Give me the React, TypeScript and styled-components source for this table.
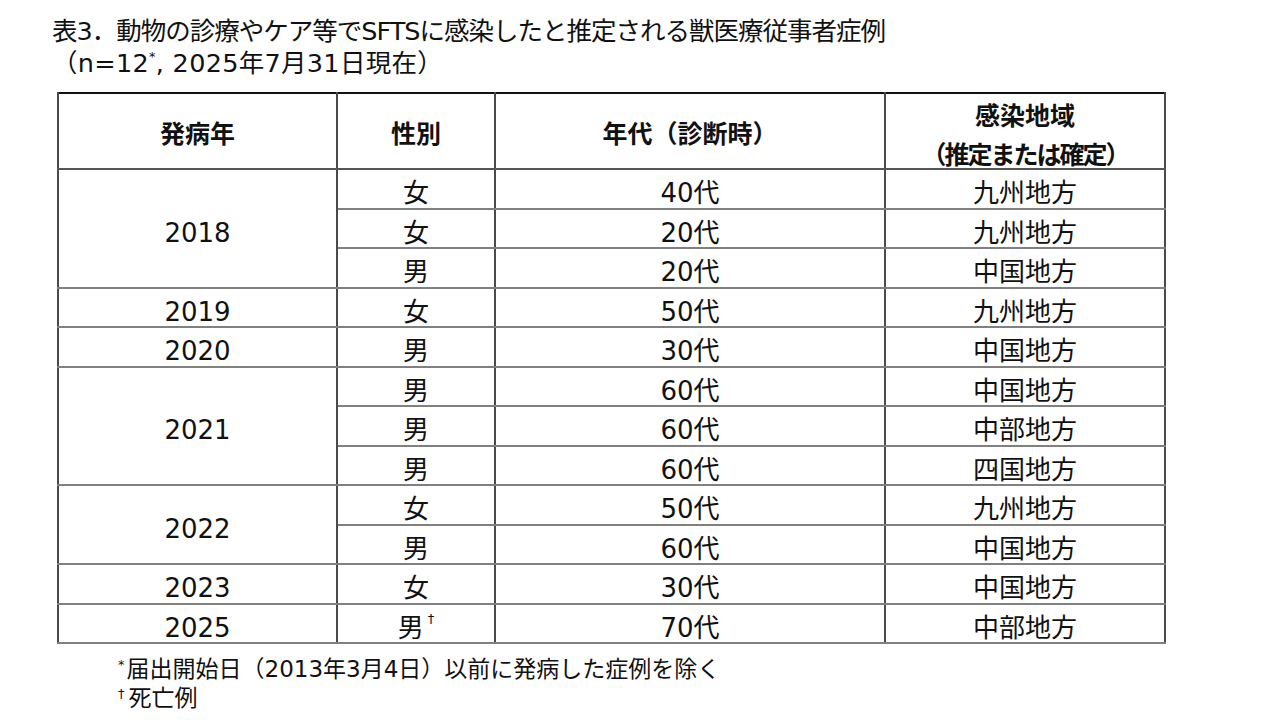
import React from "react";
import styled, { createGlobalStyle } from "styled-components";

const Global = createGlobalStyle`
  html, body { margin: 0; padding: 0; background: #fff; }
  body { font-family: "DejaVu Sans", "Noto Sans CJK JP", sans-serif; color: #111; }
`;

const Page = styled.div`
  width: 1280px;
  height: 720px;
  overflow: hidden;
  box-sizing: border-box;
  padding: 15px 0 0 52px;
`;

const Title = styled.div<{ $ls: number }>`
  font-size: 25.5px;
  line-height: 32px;
  letter-spacing: ${(p) => p.$ls}px;
  white-space: nowrap;
`;

const Sup = styled.sup<{ $top?: number; $gap?: number }>`
  font-size: 13px;
  vertical-align: top;
  line-height: 1;
  position: relative;
  top: ${(p) => p.$top ?? 2}px;
  margin-right: ${(p) => p.$gap ?? 0}px;
`;

const Table = styled.table`
  margin: 13px 0 0 5px;
  width: 1107px;
  table-layout: fixed;
  border-collapse: collapse;
  border-top: 2px solid #111;
`;

const Col = styled.col<{ $w: number }>`
  width: ${(p) => p.$w}px;
`;

const Th = styled.th`
  font-weight: 700;
  font-size: 25px;
  height: 74px;
  padding: 0;
  text-align: center;
  border-left: 2px solid #4a4a4a;
  border-right: 2px solid #4a4a4a;
  border-bottom: 2px solid #555;
  vertical-align: top;
  white-space: nowrap;
`;

const Head = styled.div<{ $lines: number }>`
  line-height: 39px;
  padding-top: ${(p) => (p.$lines === 1 ? 21 : 3)}px;
  margin-bottom: ${(p) => (p.$lines === 2 ? -7 : 0)}px;
`;

const Tight = styled.span`
  letter-spacing: -2px;
`;

const Td = styled.td`
  font-size: 26px;
  line-height: 28px;
  height: 39.5px;
  padding: 9px 0 0;
  box-sizing: border-box;
  text-align: center;
  vertical-align: middle;
  border-left: 2px solid #4a4a4a;
  border-right: 2px solid #4a4a4a;
  border-bottom: 2px solid #808080;
`;

const Notes = styled.div`
  margin: 11px 0 0 66px;
  font-size: 23px;
  line-height: 29px;
  white-space: nowrap;
`;

type Row = { year?: string; span?: number; sex: string; dead?: boolean; age: string; area: string };

const rows: Row[] = [
  { year: "2018", span: 3, sex: "女", age: "40代", area: "九州地方" },
  { sex: "女", age: "20代", area: "九州地方" },
  { sex: "男", age: "20代", area: "中国地方" },
  { year: "2019", span: 1, sex: "女", age: "50代", area: "九州地方" },
  { year: "2020", span: 1, sex: "男", age: "30代", area: "中国地方" },
  { year: "2021", span: 3, sex: "男", age: "60代", area: "中国地方" },
  { sex: "男", age: "60代", area: "中部地方" },
  { sex: "男", age: "60代", area: "四国地方" },
  { year: "2022", span: 2, sex: "女", age: "50代", area: "九州地方" },
  { sex: "男", age: "60代", area: "中国地方" },
  { year: "2023", span: 1, sex: "女", age: "30代", area: "中国地方" },
  { year: "2025", span: 1, sex: "男", dead: true, age: "70代", area: "中部地方" },
];

export default function App() {
  return (
    <>
      <Global />
      <Page>
        <Title $ls={-1.0}>表3．動物の診療やケア等でSFTSに感染したと推定される獣医療従事者症例</Title>
        <Title $ls={0.3}>
          （n=12<Sup $top={3}>*</Sup>, 2025年7月31日現在）
        </Title>
        <Table>
          <colgroup>
            <Col $w={279} />
            <Col $w={158} />
            <Col $w={390} />
            <Col $w={280} />
          </colgroup>
          <thead>
            <tr>
              <Th>
                <Head $lines={1}>発病年</Head>
              </Th>
              <Th>
                <Head $lines={1}>性別</Head>
              </Th>
              <Th>
                <Head $lines={1}>年代（診断時）</Head>
              </Th>
              <Th>
                <Head $lines={2}>
                  感染地域
                  <br />
                  <Tight>（推定または確定）</Tight>
                </Head>
              </Th>
            </tr>
          </thead>
          <tbody>
            {rows.map((r, i) => (
              <tr key={i}>
                {r.year && <Td rowSpan={r.span}>{r.year}</Td>}
                <Td>
                  {r.sex}
                  {r.dead && <Sup $top={-2}>&nbsp;†</Sup>}
                </Td>
                <Td>{r.age}</Td>
                <Td>{r.area}</Td>
              </tr>
            ))}
          </tbody>
        </Table>
        <Notes>
          <div>
            <Sup $top={3} $gap={2}>*</Sup>届出開始日（2013年3月4日）以前に発病した症例を除く
          </div>
          <div>
            <Sup $top={3} $gap={4}>†</Sup>死亡例
          </div>
        </Notes>
      </Page>
    </>
  );
}
